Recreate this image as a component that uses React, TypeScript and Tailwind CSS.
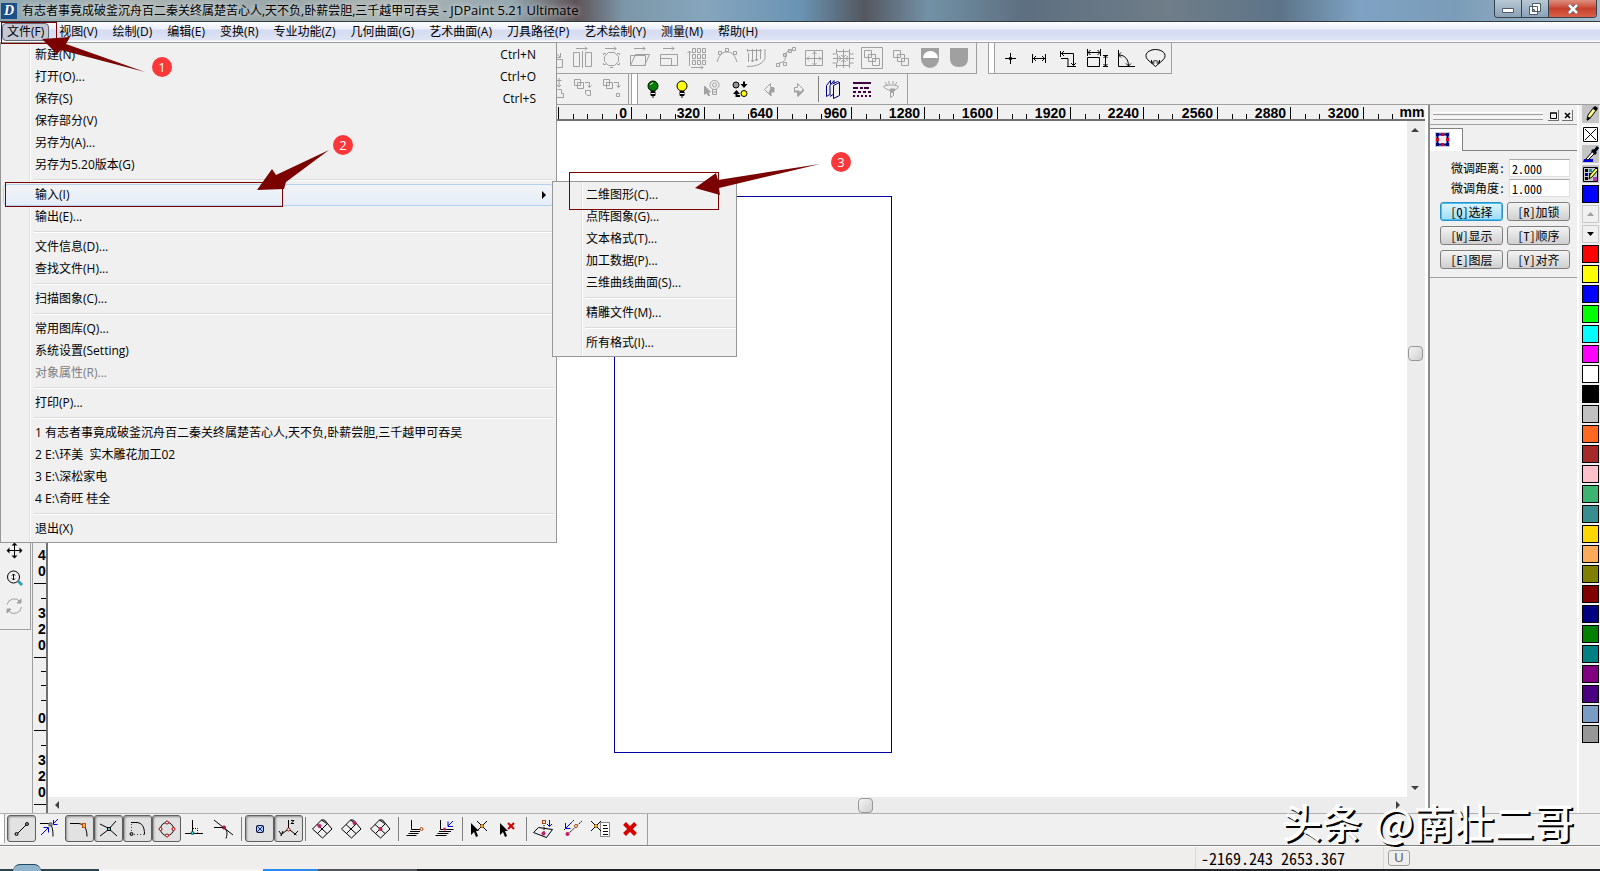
import type { ReactNode } from "react";

// ---------------------------------------------------------------------------
// Data
// ---------------------------------------------------------------------------
const FILE_NAME = "有志者事竟成破釜沉舟百二秦关终属楚苦心人,天不负,卧薪尝胆,三千越甲可吞吴";

const MENUS = [
  "文件(F)",
  "视图(V)",
  "绘制(D)",
  "编辑(E)",
  "变换(R)",
  "专业功能(Z)",
  "几何曲面(G)",
  "艺术曲面(A)",
  "刀具路径(P)",
  "艺术绘制(Y)",
  "测量(M)",
  "帮助(H)",
];

type Item = { label: string; keys?: string; open?: boolean; disabled?: boolean };

const FILE_MENU: Item[][] = [
  [
    { label: "新建(N)", keys: "Ctrl+N" },
    { label: "打开(O)...", keys: "Ctrl+O" },
    { label: "保存(S)", keys: "Ctrl+S" },
    { label: "保存部分(V)" },
    { label: "另存为(A)..." },
    { label: "另存为5.20版本(G)" },
  ],
  [{ label: "输入(I)", open: true }, { label: "输出(E)..." }],
  [{ label: "文件信息(D)..." }, { label: "查找文件(H)..." }],
  [{ label: "扫描图象(C)..." }],
  [
    { label: "常用图库(Q)..." },
    { label: "系统设置(Setting)" },
    { label: "对象属性(R)...", disabled: true },
  ],
  [{ label: "打印(P)..." }],
  [
    { label: "1 " + FILE_NAME },
    { label: "2 E:\\环美  实木雕花加工02" },
    { label: "3 E:\\深松家电" },
    { label: "4 E:\\奇旺 桂全" },
  ],
  [{ label: "退出(X)" }],
];

const IMPORT_MENU: Item[][] = [
  [
    { label: "二维图形(C)..." },
    { label: "点阵图象(G)..." },
    { label: "文本格式(T)..." },
    { label: "加工数据(P)..." },
    { label: "三维曲线曲面(S)..." },
  ],
  [{ label: "精雕文件(M)..." }],
  [{ label: "所有格式(I)..." }],
];

const COLORS = [
  "#ff0000", "#ffff00", "#0000ff", "#00ff00", "#00ffff", "#ff00ff", "#ffffff",
  "#000000", "#c0c0c0", "#ff6820", "#a52a2a", "#ffc0cb", "#3cb371", "#388e8e",
  "#ffd700", "#ffaa5a", "#808000", "#800000", "#000080", "#008000", "#008080",
  "#800080", "#4b0082", "#7a9cc4", "#969696",
];

const PANEL_BUTTONS = ["[Q]选择", "[R]加锁", "[W]显示", "[T]顺序", "[E]图层", "[Y]对齐"];

// ---------------------------------------------------------------------------
// Icons, all drawn on a 24px grid
// ---------------------------------------------------------------------------
function Icon({ children, color = "#000" }: { children: ReactNode; color?: string }) {
  return (
    <svg width="24" height="24" viewBox="0 0 24 24" fill="none" stroke={color} className="shrink-0">
      {children}
    </svg>
  );
}

const GRAY = "#a0a0a0";
const TOP_ARROW = <path d="M6 2.500h11M15 .5l2 2-2 2" />;

const TRANSFORM_ICONS: ReactNode[] = [
  <path d="M11.500 13.500h10v8h-10zM13 5l6 6M19.500 7v4.500h-4" />,
  <>
    {TOP_ARROW}
    <path d="M3.500 6.500h6v14h-6zM15.500 6.500h6v14h-6zM12.500 5v17" />
  </>,
  <>
    {TOP_ARROW}
    <path d="M9.500 6.500h6l4 4v5l-4 4h-6l-4-4v-5zM4.500 9V7.500H7M18 7.500h2.500V9M4.500 17v1.500H7M18 18.500h2.500V17M11 21.500h3" />
  </>,
  <>
    {TOP_ARROW}
    <path d="M2.500 9.500h15v10h-15zM7.500 8.500h14l-5 11h-14z" />
  </>,
  <>
    {TOP_ARROW}
    <path d="M3.500 8.500h17v11h-17zM3.500 12.500h11v7h-11" />
  </>,
  <>
    <path d="M6.500 2.500h3v4h-3zM11.500 2.500h3v4h-3zM16.500 2.500h3v4h-3zM6.500 8.500h3v4h-3zM11.500 8.500h3v4h-3zM16.500 8.500h3v4h-3zM6.500 14.500h3v4h-3zM11.500 14.500h3v4h-3zM16.500 14.500h3v4h-3z" />
    <path d="M3.500 20V5M1.500 7l2-2 2 2M5 21.500h12M15 19.500l2 2-2 2" />
  </>,
  <path d="M2 16c3-9 6-10 10-10s7 1 10 10M10.500 2.500h3v3h-3zM3.500 5.500h3v3h-3zM18.500 5.500h3v3h-3z" />,
  <path d="M3 4.500h15M3.500 3v3M8.500 3v13M12.500 3v12M16.500 3v10M7 14l1.500 2 1.500-2M11 13l1.500 2 1.500-2M3 20.500c10 0 16-3 18-8V3M4.500 7v9" />,
  <path d="M3.500 17.500h3v3h-3zM10.500 16.500h3v3h-3zM10.500 7.500h3v3h-3zM15.500 3.500h3v3h-3zM19.500 1.500h3v3h-3zM6 17c6-1 7-4 6-7 0-4 3-5 7-6" />,
  <path d="M3.500 4.500h17v15h-17zM12.500 5v14M4 12.500h16M10.500 8l2-2 2 2M10.500 17l2 2 2-2M7 10.500l-2 2 2 2M17 10.500l2 2-2 2" />,
  <path d="M5.500 3v5h-4M18.500 3v5h4M5.500 22v-5h-4M18.500 22v-5h4M5 5.500h14M5 19.500h14M12.500 3v19M2 12.500h21M10 9l2.500 2 2.500-2M10 16l2.500-2 2.500 2M8 10l2 2.500L8 15M17 10l-2 2.500 2 2.500M6.500 8v9M18.500 8v9" />,
  <path d="M1.500 1.500h21v21h-21zM4.500 4.500h7v7h-7zM8.500 8.500h7v7h-7zM12.500 12.500h7v7h-7z" />,
  <path d="M4.500 4.500h7v7h-7zM8.500 8.500h7v7h-7zM12.500 12.500h7v7h-7z" />,
  <>
    <path d="M3 2h18v11a9 9 0 0 1-18 0z" fill={GRAY} stroke="none" />
    <path d="M5 12a7.500 7 0 0 1 15 0z" fill="#fff" stroke="none" />
  </>,
  <path d="M3 2h18v10c0 6-3 9-9 9s-9-3-9-9z" fill={GRAY} stroke="none" />,
];

const MEASURE_ICONS: ReactNode[] = [
  <>
    <path d="M12.500 7v11M7 12.500h11" />
    <path d="M11.500 11.500h2v2h-2z" fill="#000" />
  </>,
  <path d="M5.500 8v9M18.500 8v9M6 12.500h12M9 10l-2.500 2.500L9 15M15 10l2.500 2.500L15 15" />,
  <path d="M4.500 5v6M5 7.500h12.500v12M8 5L5.500 7.500 8 10M15 17l2.500 2.500L20 17M5 12.500h7v8M11 20.500h9" />,
  <path d="M2.500 11.500h12v9h-12zM2.500 3v7M15.500 3v7M3 6.500h12M5.500 4L3 6.500 5.500 9M12.500 4L15 6.500 12.500 9M20.500 9v12M18 9.500h5M18 20.500h5M18.500 12l2-2 2 2M18.500 18l2 2 2-2" />,
  <path d="M4.500 4v16.500H21M4.500 9c7 0 10 5 10 11M7 6.500L4.500 9 7 11.500M12 17.500l2.500 2.500 2.500-2.500" />,
  <path d="M12.500 20.500l-8-7C0 8 6 3.500 12.500 3.500S25 8 20.500 13.500zM8.500 17c2-3 6-3 8 0M8.500 14v3h3M16.500 14v3h-3" />,
];

function Bulb({ fill }: { fill: string }) {
  return (
    <>
      <circle cx="12" cy="9" r="5" fill={fill} />
      <path d="M10 14.500h4v4h-4z" fill="#000" />
      <path d="M11 20h2" />
      <path d="M9.500 8c.5-1.500 1.500-2 2.500-2" stroke="#fff" />
      <path d="M10 16.500h4" stroke="#fff" />
    </>
  );
}

const EDIT_ICONS: ReactNode[] = [
  <path d="M14.500 3.500h5M17 1v9M15 8l2 2 2-2M15.500 12.500h4v4h2v4h-8v-4" />,
  <path d="M3.500 2.500h6v6h-6zM6.500 5.500h6v6h-6zM14 5.500h4.500v5M16.500 8.500l2 2 2-2M14.500 13.500h5v5h-3l-2-2z" />,
  <path d="M3.500 2.500h6v6h-6zM6.500 5.500h6v6h-6zM14 5.500h4.500v5M16.500 8.500l2 2 2-2M16.500 16.500h3v3h-3z" />,
];

const LAYER_ICONS: ReactNode[] = [
  <Bulb fill="#008000" />,
  <Bulb fill="#ffff00" />,
  <g stroke={GRAY}>
    <circle cx="15.500" cy="8" r="4.500" />
    <circle cx="15.500" cy="8" r="2" />
    <path d="M13.500 12.500h4v5h-4zM14 15h3" />
    <path d="M5.500 9l6 6H9l1.500 3.500H9L7.500 15.500l-2 2z" fill={GRAY} />
  </g>,
  <>
    <circle cx="8" cy="8" r="3" fill="#969696" />
    <circle cx="16" cy="16.500" r="3" fill="#ffff00" />
    <path d="M16 4.500v5M8.500 14v6M8 19h4" strokeWidth="2" />
    <path d="M12.500 7h7L16 11zM5 17h7l-3.500-4z" fill="#000" stroke="none" />
  </>,
  <g stroke={GRAY}>
    <path d="M13.500 6.500l-6 6 6 6v-4h3v-4h-3z" />
    <path d="M14 11h3v4h-3v4l-2-3z" fill={GRAY} />
  </g>,
  <g stroke={GRAY}>
    <path d="M11.500 6.500l6 6-6 6v-4h-3v-4h3z" />
    <path d="M8 14.500h4.500v3.500l5-5" strokeWidth="2" />
  </g>,
];

const VIEW_ICONS: ReactNode[] = [
  <g stroke="#000080">
    <path d="M5.500 19.500v-11l4-5v4M5.500 19.500l3-2M9 18.500v-10l4-5v3M9 19.500l3-2" />
    <path d="M12.500 21.500v-13l6-3v13zM18.500 5.500l-2-1-5 2.500" />
  </g>,
  <g stroke="#400040" strokeWidth="2">
    <path d="M3 6h18" />
    <path d="M3 11h18" strokeDasharray="5 2 3 1" />
    <path d="M3 15h18" strokeDasharray="3 2" />
    <path d="M3 19h18" strokeDasharray="2 2" />
  </g>,
  <g stroke={GRAY}>
    <path d="M4.500 9.500c3-2 12-2 15 0 0 2-4 3-5 5v4l-3 2v-6c-1-2-7-3-7-5zM6 5l2 3M10 4v3M14 4v3M18 5l-2 3" />
    <path d="M11 12h5l-3 4z" fill={GRAY} />
  </g>,
];

const NET = "M2.500 12l9-9h3l7.500 9-9.500 9zM7 7.500l10 9M17 7l-9.500 9.500M11.500 3l5 3.500";

type Snap = { icon: ReactNode; on?: boolean };

const SNAP_GROUPS: Snap[][] = [
  [
    {
      on: true,
      icon: (
        <>
          <path d="M7 17L17 7" />
          <circle cx="6.500" cy="17" r="1.500" fill="#aaa" />
          <circle cx="17" cy="7" r="1.500" fill="#aaa" />
        </>
      ),
    },
    {
      icon: (
        <>
          <path d="M3 6.500h8c4 1 5 5 5 13" />
          <path d="M12 6h3v3h-3z" fill="#999" stroke="#555" />
          <path d="M4 18l7-7M6.500 10.500h5v5M21 2l-5 5M16.500 3v4.500h4" stroke="#0000d0" />
        </>
      ),
    },
    {
      on: true,
      icon: (
        <>
          <path d="M2 6.500h8c6 0 9 5 9 13" />
          <rect x="14.500" y="6.500" width="3" height="4" stroke="#c05000" fill="#ffb060" />
        </>
      ),
    },
    {
      on: true,
      icon: (
        <>
          <path d="M3 7l8 4 9 8M3 19l8-6 8-9" />
          <rect x="10.500" y="10.500" width="3" height="3" fill="#40d0d0" />
        </>
      ),
    },
    {
      on: true,
      icon: (
        <>
          <path d="M5 5.500h5c6 0 8.500 4 8.500 12" />
          <path d="M5.500 7v9M8 17.500h10" strokeDasharray="1 2" stroke="#444" />
          <circle cx="5.500" cy="17" r="1.500" fill="#aaa" />
        </>
      ),
    },
    {
      on: true,
      icon: (
        <>
          <circle cx="12" cy="12" r="6.500" />
          <g stroke="#b00000" fill="#fff">
            <circle cx="12" cy="5.500" r="1.500" />
            <circle cx="12" cy="18.500" r="1.500" />
            <circle cx="5.500" cy="12" r="1.500" />
            <circle cx="18.500" cy="12" r="1.500" />
          </g>
        </>
      ),
    },
    {
      icon: (
        <>
          <path d="M10.500 3v13M3 16.500h18" />
          <path d="M11 11.500h4.500v4" strokeDasharray="1 1" />
          <circle cx="10.500" cy="16" r="1.500" fill="#40d0d0" stroke="#006060" />
        </>
      ),
    },
    {
      icon: (
        <>
          <path d="M3 3l19 15M3 10.500h8c5 1 6 5 4 11" />
          <circle cx="13" cy="10.500" r="1.500" fill="#c02050" stroke="#800020" />
        </>
      ),
    },
  ],
  [
    {
      on: true,
      icon: (
        <>
          <rect x="8.500" y="8.500" width="7" height="7" rx="1" fill="#a8d0f0" stroke="#101040" />
          <path d="M9 9l6 6M15 9l-6 6" stroke="#203080" />
        </>
      ),
    },
    {
      on: true,
      icon: (
        <>
          <path d="M11.500 3v9l-8 6M11.500 12l8 6M14 3.500h3l-3 3h3M2 14l2 3M6 14l-2 5M17 18l4-4" />
          <circle cx="11.500" cy="12.500" r="1.500" fill="#fff" stroke="#b00000" />
        </>
      ),
    },
  ],
  [
    { icon: <><path d={NET} /><circle cx="9.500" cy="9" r="2" fill="#c02060" stroke="none" /></> },
    { icon: <><path d={NET} /><circle cx="15.500" cy="6" r="2" fill="#c02060" stroke="none" /></> },
    { icon: <><path d={NET} /><circle cx="12.500" cy="12" r="2" fill="#c02060" stroke="none" /></> },
  ],
  [
    {
      icon: (
        <>
          <path d="M8.500 3v9.500h9M7 14.500h10M5.500 16.500h10M3.500 18.500h10" />
          <circle cx="18.500" cy="12" r="1.500" stroke="#b04000" fill="#fff" />
        </>
      ),
    },
    {
      icon: (
        <>
          <path d="M8.500 3v9.500h13M7 14.500h12M5.500 16.500h11M3.500 18.500h11" />
          <path d="M21 4l-5 5M16 4.500v5h5" stroke="#0000d0" />
          <circle cx="12.500" cy="12" r="1.500" fill="#c02060" stroke="none" />
        </>
      ),
    },
  ],
  [
    {
      icon: (
        <>
          <path d="M4 6l8 8h-3l2 5-2 1-2-5-3 3z" fill="#000" stroke="none" />
          <path d="M10 4l10 10M20 4L10 14" />
          <circle cx="15" cy="9" r="1.500" fill="#ffd040" stroke="#b06000" />
        </>
      ),
    },
    {
      icon: (
        <>
          <path d="M4 6l8 8h-3l2 5-2 1-2-5-3 3z" fill="#000" stroke="none" />
          <path d="M12 6l6 6M18 6l-6 6" stroke="#d00000" strokeWidth="2" />
        </>
      ),
    },
  ],
  [
    {
      icon: (
        <>
          <path d="M2.500 15.500l5-5 14 2-6 8z" />
          <path d="M13 6v10" strokeDasharray="1 1" />
          <path d="M18.500 3v6M16 7l2.500 2.500L21 7" stroke="#0000d0" />
          <rect x="11.500" y="3.500" width="3" height="3" stroke="#b04000" />
          <circle cx="12.500" cy="16.500" r="2" fill="#c02060" stroke="none" />
        </>
      ),
    },
    {
      icon: (
        <>
          <path d="M4 13L14 3M8 17L22 4" strokeDasharray="2 1" />
          <path d="M11 6l-5 5M5.500 6v5.500h5" stroke="#0000d0" />
          <circle cx="16" cy="9" r="1.500" stroke="#b04000" fill="#fff" />
          <circle cx="7.500" cy="17" r="2" fill="#c02060" stroke="none" />
        </>
      ),
    },
    {
      icon: (
        <>
          <path d="M11.500 5.500h9v14h-9z" stroke="#888" fill="#fff" />
          <path d="M14 8.500h4M14 11.500h5M14 14.500h5M14 17.500h5M2 4l10 10M12 4L2 14" />
          <circle cx="7" cy="9" r="1.500" fill="#ffd040" stroke="#b06000" />
        </>
      ),
    },
    { icon: <path d="M6.500 6.500l11 11M17.500 6.500l-11 11" stroke="#d40000" strokeWidth="4" /> },
  ],
];

// ---------------------------------------------------------------------------
// Menus and toolbars
// ---------------------------------------------------------------------------
function MenuList({ groups }: { groups: Item[][] }) {
  return (
    <div className="flex flex-col">
      {groups.map((group, g) => (
        <div key={g}>
          {g > 0 && (
            <div className="flex h-2 items-center pl-[31px]">
              <div className="h-0.5 flex-1 border-t border-[#dcdcdc] bg-white" />
            </div>
          )}
          {group.map((item) => (
            <div key={item.label} className="relative">
              <button
                disabled={item.disabled}
                className={
                  "flex h-[22px] w-full items-center whitespace-pre text-left disabled:text-[#7d7d7d] " +
                  (item.open
                    ? "rounded-sm border border-[#b4d2ee] bg-linear-to-b from-[#f2f4f7] to-[#e4edf7] pl-[31px] pr-[7px]"
                    : "pl-8 pr-[18px]")
                }
              >
                <span className="flex-1">{item.label}</span>
                {item.keys && <span>{item.keys}</span>}
                {item.open && (
                  <svg width="4" height="8" viewBox="0 0 4 8">
                    <path d="M0 0l4 4-4 4z" />
                  </svg>
                )}
              </button>
              {item.open && (
                <div className="absolute -top-[3px] left-[549px] z-20 w-[185px] border border-[#979797] bg-[#f0f0f0] bg-[linear-gradient(to_right,transparent_28px,#e0e0e0_28px,#e0e0e0_29px,#fff_29px,#fff_30px,transparent_30px)] py-0.5 pl-px">
                  <MenuList groups={IMPORT_MENU} />
                </div>
              )}
            </div>
          ))}
        </div>
      ))}
    </div>
  );
}

function Grip() {
  return <div className="mr-px h-[30px] w-[7px] border-x border-[#a0a0a0] bg-white" />;
}

function ToolButton({ children, color }: { children: ReactNode; color?: string }) {
  return (
    <button className="flex h-[29px] w-[29px] items-center justify-center pr-px">
      <Icon color={color}>{children}</Icon>
    </button>
  );
}

function Toolbars() {
  return (
    <div>
      <div className="flex h-[31px]">
        <div className="flex w-[977px] justify-end border-b border-r border-[#a0a0a0] pr-0.5">
          {TRANSFORM_ICONS.map((icon, i) => (
            <ToolButton key={i} color={GRAY}>{icon}</ToolButton>
          ))}
        </div>
        <div className="ml-[11px] flex border-b border-r border-[#a0a0a0] pr-px">
          <Grip />
          {MEASURE_ICONS.map((icon, i) => (
            <ToolButton key={i}>{icon}</ToolButton>
          ))}
        </div>
      </div>
      <div className="flex h-[31px] border-b border-[#a0a0a0]">
        <div className="flex w-[629px] justify-end border-r border-[#a0a0a0] pr-px">
          {EDIT_ICONS.map((icon, i) => (
            <ToolButton key={i} color={GRAY}>{icon}</ToolButton>
          ))}
        </div>
        <div className="ml-0.5 flex border-r border-[#a0a0a0] pr-px">
          <Grip />
          {LAYER_ICONS.map((icon, i) => (
            <ToolButton key={i}>{icon}</ToolButton>
          ))}
          <div className="my-0.5 ml-[5px] w-px bg-[#808080]" />
          {VIEW_ICONS.map((icon, i) => (
            <ToolButton key={i}>{icon}</ToolButton>
          ))}
        </div>
      </div>
    </div>
  );
}

// ---------------------------------------------------------------------------
// Workspace
// ---------------------------------------------------------------------------
const RULER_TEXT = { fontFamily: "'Liberation Sans', Arial, sans-serif", fontWeight: 700, fontSize: 14 };

function TopRuler() {
  const majors = Array.from({ length: 12 }, (_, i) => ({
    value: (i - 1) * 320,
    x: Math.round(598 + (i - 1) * 73.2),
  }));
  return (
    <div className="col-span-3 flex justify-between overflow-hidden border-b-2 border-[#707070]">
      <svg height="14" className="min-w-0 flex-1">
        {majors.map(({ value, x }) => (
          <g key={value}>
            {[0, 1, 2, 3, 4].map((n) => (
              <rect key={n} x={x + Math.round(n * 14.6)} y={n ? 9 : 2} width="1" height={n ? 5 : 12} />
            ))}
          </g>
        ))}
        {majors.slice(1).map(({ value, x }) => {
          const w = String(value).length * 8;
          return (
            <g key={value}>
              <rect x={x - w - 4} y="0" width={w + 3} height="14" fill="#f0f0f0" />
              <text x={x - 4} y="13" textAnchor="end" style={RULER_TEXT}>{value}</text>
            </g>
          );
        })}
      </svg>
      <span className="w-[26px] text-center font-['Liberation_Sans',Arial,sans-serif] text-[14px] leading-[14px] font-bold">mm</span>
    </div>
  );
}

function SideRuler() {
  const digits: [string, number][] = [
    ["4", 439], ["0", 455],
    ["3", 497], ["2", 513], ["0", 529],
    ["0", 602],
    ["3", 644], ["2", 660], ["0", 676],
  ];
  return (
    <svg className="row-span-2 h-full w-[15px] border-r-2 border-[#707070]">
      {[462, 536, 609, 683].map((y) => (
        <rect key={y} x="1" y={y} width="12" height="1" />
      ))}
      {[477, 550, 564, 579, 624].map((y) => (
        <rect key={y} x="8" y={y} width="5" height="1" />
      ))}
      {digits.map(([d, y]) => (
        <text key={y} x="9" y={y} textAnchor="middle" style={RULER_TEXT}>{d}</text>
      ))}
    </svg>
  );
}

function Thumb() {
  return <div className="size-[15px] rounded-sm border border-[#979797] bg-linear-to-br from-[#f5f5f5] to-[#cfcfcf]" />;
}

function Workspace() {
  return (
    <div className="grid min-w-0 flex-1 grid-cols-[15px_1fr_18px] grid-rows-[16px_1fr_16px] border-l border-[#a0a0a0]">
      <TopRuler />
      <SideRuler />
      <div className="relative overflow-hidden bg-white">
        <div className="absolute top-[75px] left-[566px] h-[557px] w-[278px] border border-[#0000a0]" />
      </div>
      <div className="flex flex-col items-center justify-between bg-[#ececec] py-[7px] pr-0.5">
        <svg width="8" height="4" viewBox="0 0 8 4"><path d="M4 0l4 4H0z" fill="#404040" /></svg>
        <div className="-mt-[212px]"><Thumb /></div>
        <svg width="8" height="4" viewBox="0 0 8 4"><path d="M4 4l4-4H0z" fill="#404040" /></svg>
      </div>
      <div className="flex items-center justify-between bg-[#ececec] px-[7px]">
        <svg width="4" height="8" viewBox="0 0 4 8"><path d="M0 4l4-4v8z" fill="#404040" /></svg>
        <div className="ml-[275px]"><Thumb /></div>
        <svg width="4" height="8" viewBox="0 0 4 8"><path d="M4 4L0 0v8z" fill="#404040" /></svg>
      </div>
      <div className="bg-[#ececec]" />
    </div>
  );
}

function NumberField({ id, label, value }: { id: string; label: string; value: string }) {
  return (
    <div className="flex items-center justify-end gap-1">
      <label htmlFor={id}>{label}</label>
      <input
        id={id}
        defaultValue={value}
        className="h-[18px] w-[61px] border border-[#dfdfdf] border-t-[#a8a8a8] bg-white pl-0.5 outline-none"
      />
    </div>
  );
}

function SidePanel() {
  return (
    <aside className="flex w-[154px] shrink-0 flex-col border-l-[3px] border-white font-['Noto_Sans_Mono_CJK_SC','Noto_Sans_CJK_SC',monospace] text-[12px] leading-4">
      <div className="flex flex-1 flex-col border-r-2 border-l-2 border-r-white border-l-[#8c8c8c]">
        <div className="flex h-5 items-center gap-[3px] border-b border-[#a0a0a0] pt-0.5 pr-1 pl-[3px]">
          <div className="mr-0.5 flex flex-1 flex-col gap-0.5">
            <div className="h-[3px] border-t border-b border-t-white border-b-[#a0a0a0]" />
            <div className="h-[3px] border-t border-b border-t-white border-b-[#a0a0a0]" />
          </div>
          <button className="flex size-[11px] items-center justify-center border-r border-b border-[#707070]">
            <svg width="7" height="7" viewBox="0 0 7 7"><path d="M.5 1h6v5.500h-6zM0 1h7" fill="none" stroke="#000" /></svg>
          </button>
          <button className="flex size-[11px] items-center justify-center border-r border-b border-[#707070]">
            <svg width="7" height="7" viewBox="0 0 7 7"><path d="M1 1l5 5M6 1L1 6" stroke="#000" strokeWidth="1.500" /></svg>
          </button>
        </div>
        <div className="mt-[3px] flex h-[23px]">
          <button className="flex w-[33px] items-center border-t border-r border-[#808080] bg-white pb-0.5 pl-[5px]">
            <svg width="15" height="15" viewBox="0 0 15 15">
              <path d="M0 0h15v15H0z" fill="#c8c8c8" />
              <path d="M2.500 2.500h10v10h-10z" fill="#eee" stroke="#000080" strokeWidth="2" />
              <path d="M1 1h3v3H1zM11 1h3v3h-3zM1 11h3v3H1zM11 11h3v3h-3z" fill="#000080" />
              <path d="M6 1h3v3H6zM6 11h3v3H6zM1 6h3v3H1zM11 6h3v3h-3z" fill="#e00020" />
            </svg>
          </button>
          <div className="flex-1 border-b border-[#808080]" />
        </div>
        <div className="flex flex-col gap-0.5 border-b border-[#a0a0a0] pt-2 pr-[7px] pb-2">
          <NumberField id="nudge-distance" label="微调距离:" value="2.000" />
          <NumberField id="nudge-angle" label="微调角度:" value="1.000" />
          <div className="mt-[3px] ml-2.5 grid grid-cols-2 gap-x-1 gap-y-[5px] whitespace-nowrap">
            {PANEL_BUTTONS.map((label, i) => (
              <button
                key={label}
                className={
                  "h-[19px] rounded-[3px] border leading-4 " +
                  (i === 0
                    ? "border-[#2c90c8] bg-linear-to-b from-[#e0f5fd] to-[#98dcf8] ring-1 ring-[#48c0f0] ring-inset"
                    : "border-[#808080] bg-linear-to-b from-[#f4f4f4] to-[#cfcfcf]")
                }
              >
                {label}
              </button>
            ))}
          </div>
        </div>
      </div>
    </aside>
  );
}

function ColorBar() {
  return (
    <div className="flex w-[21px] shrink-0 flex-col gap-0.5 pl-[3px]">
      <button className="h-[18px] w-[17px] bg-[#c4c4c4]">
        <svg width="17" height="18" viewBox="0 0 17 18">
          <path d="M5 15l1-5 6-8 3 2-6 8z" fill="#ffff90" stroke="#000" />
          <path d="M5 16l1-4 3 1zM11 4l3 2 2-3-3-2z" />
        </svg>
      </button>
      <button className="h-[18px] w-[17px] bg-white">
        <svg width="17" height="18" viewBox="0 0 17 18" fill="none" stroke="#000">
          <path d="M1.500 2.500h14v14h-14zM3 4l11 11M14 4L3 15" />
        </svg>
      </button>
      <button className="h-[18px] w-[17px] bg-[#c4c4c4]">
        <svg width="17" height="18" viewBox="0 0 17 18">
          <path d="M2 14h9v3H1z" fill="#0000e0" />
          <path d="M4 14l7-8 2 2-7 7z" fill="#fff" stroke="#000" />
          <path d="M10 5l4 4M12 7l4-5" stroke="#000018" strokeWidth="3" />
        </svg>
      </button>
      <button className="h-[18px] w-[17px] bg-[#c4c4c4]">
        <svg width="17" height="18" viewBox="0 0 17 18">
          <path d="M1.500 2.500h14v14h-14z" fill="#c8c8c8" stroke="#000" />
          <path d="M3 4h3v3H3zM7 8h3v3H7zM3 12h3v3H3z" />
          <path d="M7 4h3v3H7z" fill="#00a0a0" />
          <path d="M3 8h3v3H3z" fill="#000090" />
          <path d="M11 12h4v4h-4z" fill="#b040b0" />
          <path d="M7 14l1-4 6-7 2 2-6 7z" fill="#ffff50" stroke="#000" />
        </svg>
      </button>
      <button className="h-[18px] w-[17px] border border-black bg-[#0000ff]" />
      <button className="flex h-[18px] w-[17px] items-center justify-center border border-[#c8c8c8]">
        <svg width="7" height="4" viewBox="0 0 7 4"><path d="M0 4h7L3.500 0z" fill="#a0a0a0" /></svg>
      </button>
      <button className="flex h-[18px] w-[17px] items-center justify-center border border-[#c8c8c8]">
        <svg width="7" height="4" viewBox="0 0 7 4"><path d="M0 0h7L3.500 4z" /></svg>
      </button>
      {COLORS.map((color) => (
        <button key={color} className="h-[18px] w-[17px] border border-black" style={{ backgroundColor: color }} />
      ))}
    </div>
  );
}

function LeftTools() {
  return (
    <div className="flex w-8 shrink-0 flex-col">
      <div className="flex h-[525px] w-[31px] flex-col items-center justify-end gap-1 border-r border-b border-[#a0a0a0] pr-[3px] pb-[11px]">
        <button>
          <Icon>
            <path d="M12.500 5v15M5 12.500h15" />
            <path d="M12.500 4.500l3 3h-6zM12.500 20.500l3-3h-6zM4.500 12.500l3-3v6zM20.500 12.500l-3-3v6z" fill="#000" stroke="none" />
          </Icon>
        </button>
        <button>
          <Icon>
            <circle cx="11.500" cy="11" r="6" />
            <path d="M11.500 8v6M10 9.500L11.500 8 13 9.500M10 12.500l1.500 1.500 1.500-1.500" />
            <path d="M16 15l4 4" stroke="#30a0b8" strokeWidth="3" />
          </Icon>
        </button>
        <button>
          <Icon color={GRAY}>
            <path d="M5 10.500a7.500 7.500 0 0 1 13-3M19.500 13a7.500 7.500 0 0 1-13 4" />
            <path d="M19 5v4h-4zM5 19v-4h4z" fill={GRAY} />
          </Icon>
        </button>
      </div>
    </div>
  );
}

// ---------------------------------------------------------------------------
// Tutorial marks drawn over the window
// ---------------------------------------------------------------------------
function Marks() {
  const badge =
    "absolute flex size-5 items-center justify-center rounded-full bg-[#fb373a] text-[13px] leading-5 text-white";
  const box = "absolute border border-[#7b0000]";
  return (
    <div className="pointer-events-none absolute inset-0 z-30">
      <div className={box + " top-[22px] left-px h-[22px] w-[56px]"} />
      <div className={box + " top-[182px] left-[5px] h-[25px] w-[278px]"} />
      <div className={box + " top-[172px] left-[569px] h-[38px] w-[150px]"} />
      <svg className="absolute inset-0 size-full" fill="#7b0000">
        <path d="M42 39l28-2-4 7 79 28-84-22-4 4z" />
        <path d="M257 190l15-21 4 6 53-25-43 32-2 7z" />
        <path d="M695 188l21-15 2 7 102-16-101 24 1 7z" />
      </svg>
      <span className={badge + " top-[57px] left-[152px]"}>1</span>
      <span className={badge + " top-[135px] left-[333px]"}>2</span>
      <span className={badge + " top-[152px] left-[831px]"}>3</span>
      <div className="absolute right-[26px] bottom-[30px] flex items-center gap-[13px] font-['Noto_Sans_CJK_SC',sans-serif] text-[40px] leading-10 font-medium whitespace-nowrap text-white [text-shadow:2px_2px_0_#000]">
        <span>头条</span>
        <span>@南壮二哥</span>
      </div>
    </div>
  );
}

export default function App() {
  return (
    <div className="relative flex h-screen flex-col overflow-hidden bg-[#f0f0f0] font-['Open_Sans','Noto_Sans_CJK_SC',sans-serif] text-[12px] leading-4 text-black">
      {/* Title bar */}
      <header className="flex h-[22px] shrink-0 items-start border-b border-[#303840] bg-[linear-gradient(to_right,#8fa6b0_0%,#a9b3b2_8%,#98a5a8_18%,#adb5b4_24%,#94a6ae_32%,#5d5357_36%,#7d97a8_39%,#86a5bc_44%,#6a94b4_50%,#54575f_54%,#7391a6_58%,#5d6f80_64%,#6f7d88_73%,#5d7488_80%,#7fa3c4_85%,#7b9cb8_91%,#a8bccb_100%)]">
        <span className="mt-[3px] ml-px flex size-4 items-center justify-center bg-[#1a5088] font-['Liberation_Serif',serif] text-[14px] leading-4 font-bold text-white italic">
          D
        </span>
        <h1 className="ml-[5px] flex-1 leading-[21px] whitespace-pre [text-shadow:0_0_6px_#fff]">
          {FILE_NAME}
          <span className="text-[13px]"> - JDPaint 5.21 Ultimate</span>
        </h1>
        <div className="mr-[3px] flex h-[18px] overflow-hidden rounded-b-[4px] border border-t-0 border-[#38424c]">
          <button className="flex w-[27px] items-end justify-center border-r border-[#38424c] bg-linear-to-b from-[#b8c8d4] to-[#8aa2b6] pb-1">
            <svg width="12" height="5" viewBox="0 0 12 5"><path d="M.5.5h11v4H.5z" fill="#fff" stroke="#505a66" /></svg>
          </button>
          <button className="flex w-[27px] items-center justify-center border-r border-[#38424c] bg-linear-to-b from-[#b8c8d4] to-[#8aa2b6]">
            <svg width="12" height="12" viewBox="0 0 12 12" fill="#fff" stroke="#505a66">
              <path d="M3.500.5h8v8h-8zM.5 3.500h8v8h-8z" />
              <path d="M3.500 6.500h2v2h-2z" fill="#8aa2b6" />
            </svg>
          </button>
          <button className="flex w-[47px] items-center justify-center bg-linear-to-b from-[#dc9080] via-[#c8402c] to-[#d8604a]">
            <svg width="12" height="10" viewBox="0 0 12 10">
              <path d="M2 1l8 8M10 1L2 9" stroke="#505a66" strokeWidth="4" />
              <path d="M2 1l8 8M10 1L2 9" stroke="#fff" strokeWidth="2.500" />
            </svg>
          </button>
        </div>
      </header>

      {/* Menu bar */}
      <nav className="relative flex h-[21px] shrink-0 items-center border-b border-[#a0a4ac] bg-[linear-gradient(to_bottom,#fdfdff_0%,#eceffa_35%,#d4daf0_40%,#dfe4f5_90%,#fff_95%)] pl-0.5">
        {MENUS.map((label, i) => (
          <button
            key={label}
            className={
              "h-[18px] rounded-sm border pb-px text-[12px] leading-4 whitespace-nowrap " +
              (i === 0 ? "mr-[3px] border-[#606878] bg-[#c4c8d4] px-1" : "border-transparent pr-[7px] pl-1.5")
            }
          >
            {label}
          </button>
        ))}
        <div className="absolute top-5 left-0 z-20 w-[557px] border border-[#979797] bg-[#f0f0f0] bg-[linear-gradient(to_right,transparent_28px,#e0e0e0_28px,#e0e0e0_29px,#fff_29px,#fff_30px,transparent_30px)] px-0.5 pt-px pb-0.5">
          <MenuList groups={FILE_MENU} />
        </div>
      </nav>

      <Toolbars />

      <main className="flex min-h-0 flex-1">
        <LeftTools />
        <Workspace />
        <SidePanel />
        <ColorBar />
      </main>

      {/* Snap toolbar */}
      <div className="flex h-[33px] shrink-0 border-t border-b border-t-[#b0b0b0] border-b-[#808080]">
        <div className="flex items-center border-r border-[#a0a0a0] pr-px pb-0.5">
          <div className="mr-0.5 h-full w-[5px] border-r border-[#a0a0a0] bg-white" />
          {SNAP_GROUPS.map((group, g) => (
            <div key={g} className="flex items-center">
              {g > 0 && <div className="mr-[3px] ml-0.5 h-6 w-px bg-[#808080]" />}
              {group.map(({ icon, on }, i) => (
                <button
                  key={i}
                  aria-pressed={!!on}
                  className={
                    "flex h-[27px] w-[29px] items-center justify-center " +
                    (on
                      ? "rounded-[3px] border border-[#606060] bg-[#e2e2e2] shadow-[inset_1px_1px_2px_#909090]"
                      : "pr-[3px]")
                  }
                >
                  <Icon>{icon}</Icon>
                </button>
              ))}
            </div>
          ))}
        </div>
      </div>

      {/* Status bar */}
      <footer className="flex h-[23px] shrink-0 items-center border-t border-white bg-[#f0eded]">
        <div className="flex-1" />
        <output className="flex h-full w-[188px] items-center border-l border-[#d8d8d8] pl-[5px] font-['Noto_Sans_Mono_CJK_SC','Liberation_Mono',monospace] text-[16px] leading-5">
          -2169.243 2653.367
        </output>
        <div className="flex h-full w-[217px] items-center border-l border-[#d8d8d8] pl-1">
          <button className="h-4 w-[22px] rounded-[3px] border border-[#a0a0a0] font-['Liberation_Sans',sans-serif] text-[13px] leading-3.5 text-[#606060]">
            U
          </button>
        </div>
      </footer>

      {/* Top edge of the taskbar */}
      <div className="relative flex h-0.5 shrink-0 bg-[#202428]">
        <div className="absolute bottom-0 left-[13px] h-[7px] w-7 rounded-t-full border-t border-[#204860] bg-[#8fb4cc]" />
        <div className="w-[99px] bg-[#2a4450]" />
        <div className="w-[164px] bg-[#f4f4f4]" />
        <div className="w-[55px] bg-[#2a8af0]" />
        <div className="w-[99px] bg-[#50565c]" />
      </div>

      <Marks />
    </div>
  );
}
